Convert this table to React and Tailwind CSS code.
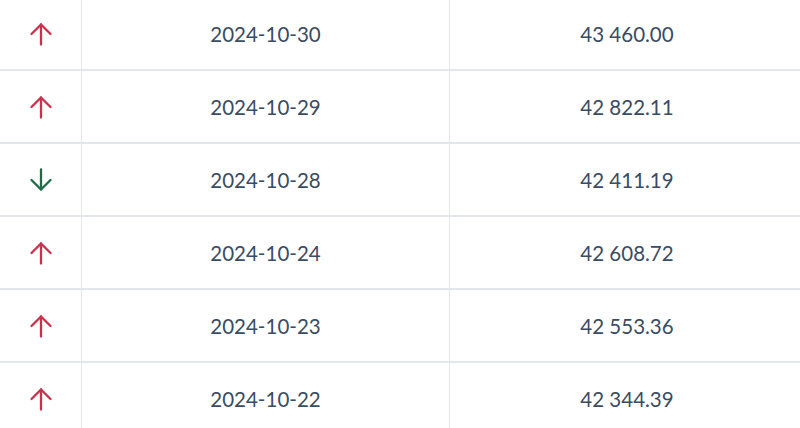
import React from "react";

const rows = [
  { up: true, date: "2024-10-30", value: "43 460.00" },
  { up: true, date: "2024-10-29", value: "42 822.11" },
  { up: false, date: "2024-10-28", value: "42 411.19" },
  { up: true, date: "2024-10-24", value: "42 608.72" },
  { up: true, date: "2024-10-23", value: "42 553.36" },
  { up: true, date: "2024-10-22", value: "42 344.39" },
];

function Arrow({ up }) {
  return (
    <svg width="24" height="24" viewBox="0 0 24 24" fill="none" stroke={up ? "#c8324c" : "#1f6b47"} strokeWidth="2.3" strokeLinecap="round" strokeLinejoin="round">
      {up ? (
        <>
          <path d="M12 22.5V2.5" />
          <path d="M2.5 12L12 2.5L21.5 12" />
        </>
      ) : (
        <>
          <path d="M12 1.5V21.5" />
          <path d="M2.5 12L12 21.5L21.5 12" />
        </>
      )}
    </svg>
  );
}

export default function App() {
  return (
    <div className="w-[800px] h-[428px] overflow-hidden bg-white" style={{ fontFamily: "Lato, 'Noto Sans', sans-serif" }}>
      <div className="-mt-[2px] flex flex-col">
        {rows.map((r, i) => (
          <div key={i} className="grid grid-cols-[82px_368px_1fr] h-[73px] border-b-2 border-[#e3e6ea]">
            <div className="flex items-center justify-center border-r border-[#e3e6ea] pl-[1px]">
              <Arrow up={r.up} />
            </div>
            <div className="flex items-center justify-center border-r border-[#e3e6ea] text-[20.5px] font-normal text-[#3a4c62] pt-[1px]">
              {r.date}
            </div>
            <div className="flex items-center justify-center text-[20.5px] font-normal text-[#3a4c62] pl-[4px] pt-[1px]">
              {r.value}
            </div>
          </div>
        ))}
      </div>
    </div>
  );
}
